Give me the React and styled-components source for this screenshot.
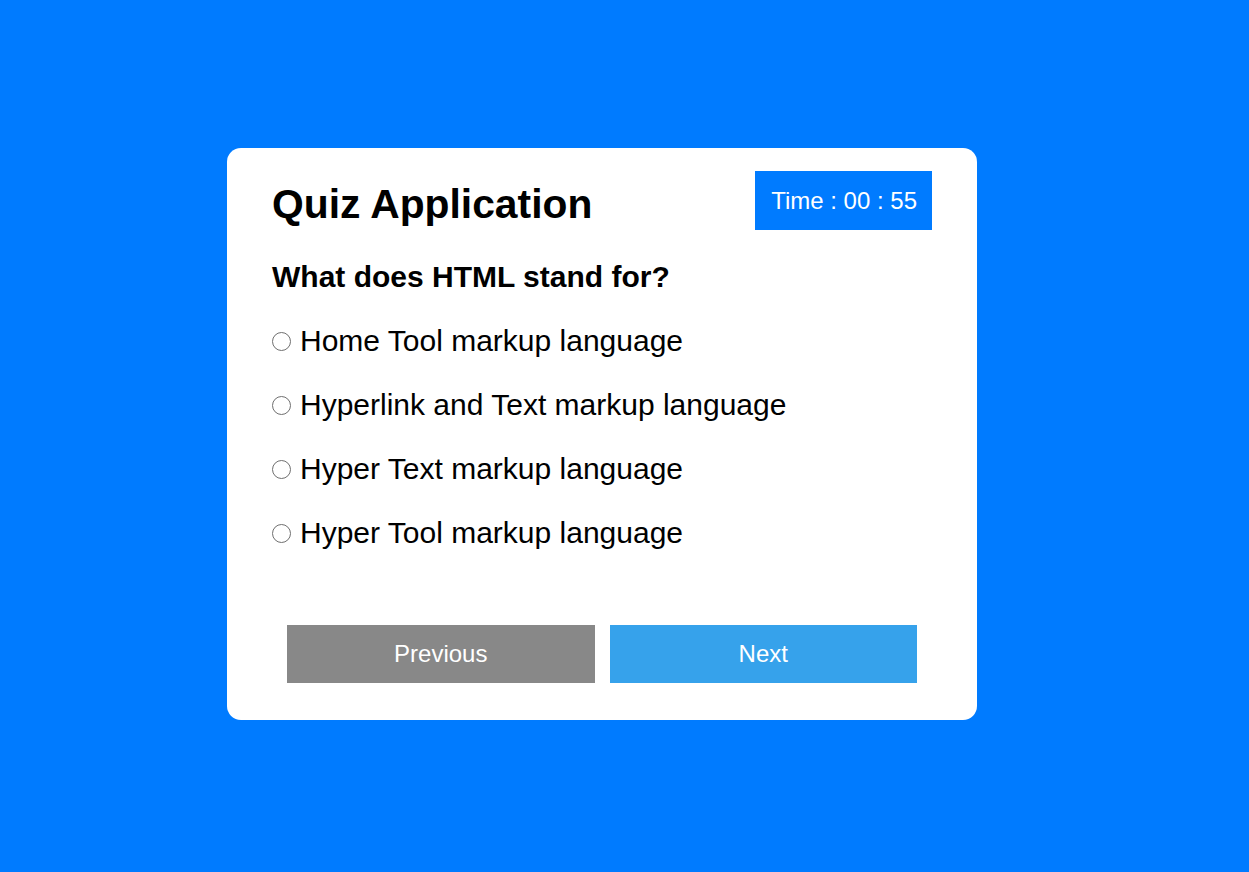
import React, { useState } from 'react';
import styled, { createGlobalStyle } from 'styled-components';

const GlobalStyle = createGlobalStyle`
  html, body {
    margin: 0;
    padding: 0;
    background: #007bff;
    font-family: "Liberation Sans", Arial, sans-serif;
  }
`;

const Page = styled.div`
  min-height: 100vh;
  display: flex;
  align-items: center;
  justify-content: center;
  padding: 0 45px 4px 0;
  box-sizing: border-box;
`;

const Card = styled.div`
  width: 750px;
  box-sizing: border-box;
  background: #ffffff;
  border-radius: 14px;
  padding: 23px 45px 37px;
`;

const Header = styled.div`
  display: flex;
  align-items: center;
  justify-content: space-between;
  height: 59px;
`;

const Title = styled.h1`
  margin: 7px 0 0;
  font-size: 40.8px;
  line-height: 46px;
  font-weight: 700;
  color: #000;
`;

const Timer = styled.div`
  background: #007bff;
  color: #fff;
  font-size: 24px;
  line-height: 27px;
  padding: 16px 15px 16px 16px;
`;

const Question = styled.h2`
  margin: 30px 0 0;
  font-size: 30px;
  line-height: 34px;
  font-weight: 700;
  color: #000;
`;

const Options = styled.div`
  margin-top: 30px;
  display: flex;
  flex-direction: column;
  gap: 30px;
`;

const Option = styled.label`
  display: flex;
  align-items: center;
  font-size: 30px;
  line-height: 34px;
  color: #000;
  cursor: pointer;
`;

const Radio = styled.input`
  appearance: none;
  box-sizing: border-box;
  width: 19px;
  height: 19px;
  margin: 0 9px 0 0;
  border: 1.3px solid #6f6f6f;
  border-radius: 50%;
  background: #fff;
  flex-shrink: 0;

  &:checked {
    background: radial-gradient(circle, #0075ff 0 4.5px, #fff 5px);
    border-color: #0075ff;
  }
`;

const Actions = styled.div`
  display: flex;
  gap: 15px;
  padding: 0 15px;
  margin-top: 75px;
`;

const Button = styled.button`
  flex: 1;
  height: 58px;
  border: none;
  background: ${(p) => (p.$primary ? '#36a2eb' : '#888888')};
  color: #fff;
  font-family: "Liberation Sans", Arial, sans-serif;
  font-size: 24px;
  cursor: pointer;
`;

const options = [
  'Home Tool markup language',
  'Hyperlink and Text markup language',
  'Hyper Text markup language',
  'Hyper Tool markup language',
];

export default function App() {
  const [answer, setAnswer] = useState(null);

  return (
    <Page>
      <GlobalStyle />
      <Card>
        <Header>
          <Title>Quiz Application</Title>
          <Timer>Time : 00 : 55</Timer>
        </Header>
        <Question>What does HTML stand for?</Question>
        <Options>
          {options.map((o, i) => (
            <Option key={o}>
              <Radio
                type="radio"
                name="answer"
                checked={answer === i}
                onChange={() => setAnswer(i)}
              />
              {o}
            </Option>
          ))}
        </Options>
        <Actions>
          <Button>Previous</Button>
          <Button $primary>Next</Button>
        </Actions>
      </Card>
    </Page>
  );
}
